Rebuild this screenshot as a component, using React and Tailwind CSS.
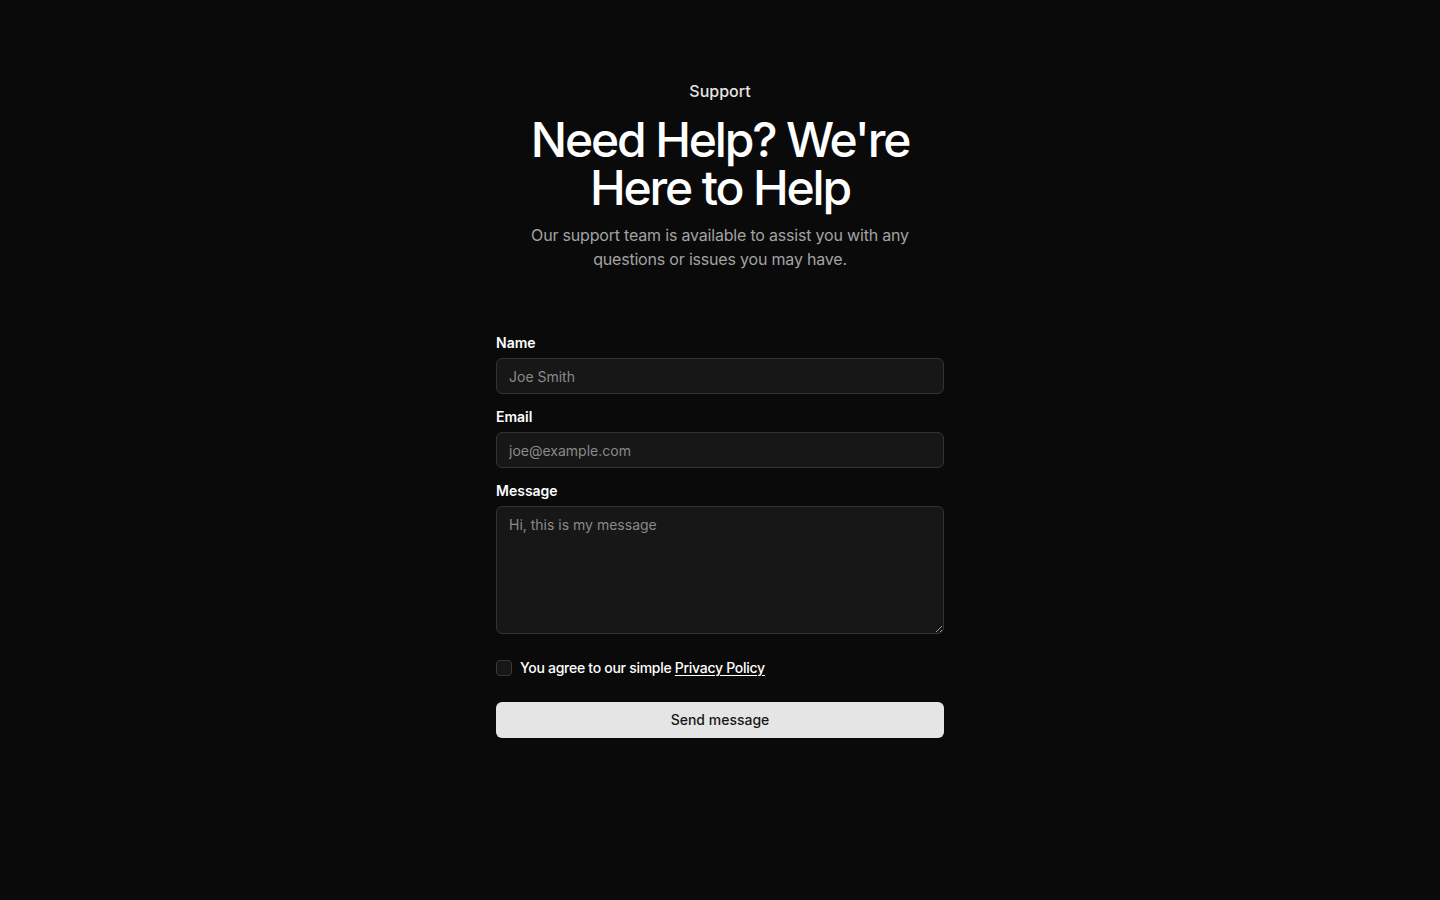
export default function App() {
  const font = { fontFamily: 'Inter, "Noto Sans", sans-serif' };
  return (
    <div className="min-h-screen w-full bg-[#0a0a0a] text-white" style={font}>
      <div className="mx-auto flex max-w-md flex-col items-center pt-[79px] text-center">
        <div className="text-base font-medium leading-6 text-[#e5e5e5]">Support</div>
        <h1 className="mt-[13px] text-[48px] font-medium leading-[48px] tracking-[-0.045em] text-white">
          Need Help? We're Here to Help
        </h1>
        <p className="mt-[11px] text-base leading-6 tracking-[-0.012em] text-[#a3a3a3]">
          Our support team is available to assist you with any questions or issues you may have.
        </p>
      </div>
      <form className="mx-auto mt-[65px] flex w-[448px] flex-col" onSubmit={(e) => e.preventDefault()}>
        <div className="flex flex-col gap-4">
          <div className="flex flex-col gap-2">
            <label className="text-sm font-semibold leading-none text-white">Name</label>
            <input
              placeholder="Joe Smith"
              className="h-9 w-full rounded-md border border-[#333333] bg-[#171717] px-3 text-sm text-white placeholder:text-[#8a8a8a] outline-none"
              style={font}
            />
          </div>
          <div className="flex flex-col gap-2">
            <label className="text-sm font-semibold leading-none text-white">Email</label>
            <input
              placeholder="joe@example.com"
              className="h-9 w-full rounded-md border border-[#333333] bg-[#171717] px-3 text-sm text-white placeholder:text-[#8a8a8a] outline-none"
              style={font}
            />
          </div>
          <div className="flex flex-col gap-2">
            <label className="text-sm font-semibold leading-none text-white">Message</label>
            <textarea
              placeholder="Hi, this is my message"
              className="h-32 w-full rounded-md border border-[#333333] bg-[#171717] px-3 py-2 text-sm text-white placeholder:text-[#8a8a8a] outline-none"
              style={font}
            />
          </div>
        </div>
        <div className="mt-6 flex items-center gap-2">
          <span className="h-4 w-4 rounded-[4px] border border-[#3a3a3a] bg-[#171717]" />
          <span className="text-sm font-medium leading-5 tracking-[-0.02em] text-white">
            You agree to our simple <a href="#" className="underline underline-offset-2">Privacy Policy</a>
          </span>
        </div>
        <button
          type="submit"
          className="mt-6 h-9 w-full rounded-md bg-[#e5e5e5] text-sm font-medium text-[#171717]"
          style={font}
        >
          Send message
        </button>
      </form>
    </div>
  );
}
